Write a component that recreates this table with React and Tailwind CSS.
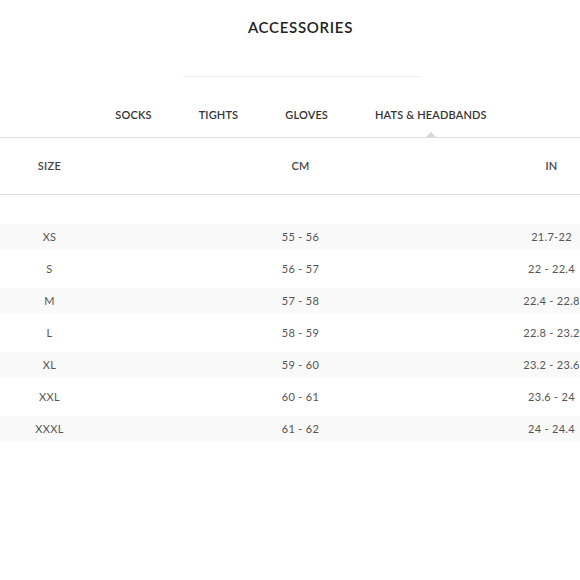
import React from "react";

const rows = [
  ["XS", "55 - 56", "21.7-22"],
  ["S", "56 - 57", "22 - 22.4"],
  ["M", "57 - 58", "22.4 - 22.8"],
  ["L", "58 - 59", "22.8 - 23.2"],
  ["XL", "59 - 60", "23.2 - 23.6"],
  ["XXL", "60 - 61", "23.6 - 24"],
  ["XXXL", "61 - 62", "24 - 24.4"],
];

const tabs = ["SOCKS", "TIGHTS", "GLOVES", "HATS & HEADBANDS"];

export default function App() {
  return (
    <div className="w-[580px] h-[580px] overflow-hidden bg-white text-[#333]" style={{ fontFamily: "Lato, 'Noto Sans', sans-serif" }}>
      <div className="h-[76px] pt-[18px] pl-[21px] text-center">
        <div className="text-[15px] leading-[18px] font-semibold tracking-[0.7px] text-[#222]">ACCESSORIES</div>
      </div>
      <div className="flex justify-center pl-[24px]">
        <div className="w-[238px] h-px bg-[#f0f0f0]" />
      </div>
      <div className="h-[61px] border-b border-[#dcdcdc] flex justify-center gap-[47px] pl-[22px]">
        {tabs.map((t, i) => (
          <div key={t} className="relative h-full pt-[31px]">
            <div className="text-[11px] leading-[14px] font-semibold tracking-[0.15px] text-[#333] whitespace-nowrap">{t}</div>
            {i === 3 && (
              <div className="absolute bottom-0 left-1/2 -translate-x-1/2 w-0 h-0 border-l-[5px] border-r-[5px] border-b-[5px] border-l-transparent border-r-transparent border-b-[#d8d8d8]" />
            )}
          </div>
        ))}
      </div>
      <div className="w-[580px] overflow-hidden">
        <div className="ml-[-76px] w-[753px]">
          <div className="h-[57px] border-b border-[#dcdcdc] grid grid-cols-3 items-center text-[11px] font-semibold tracking-[0.3px] text-[#444]">
            <div className="text-center">SIZE</div>
            <div className="text-center">CM</div>
            <div className="text-center">IN</div>
          </div>
          <div className="pt-[26px]">
            {rows.map((r, i) => (
              <div key={r[0]} className="h-[32px] py-[3px]">
                <div className={`h-[26px] grid grid-cols-3 items-center text-[11px] tracking-[0.3px] text-[#555] ${i % 2 === 0 ? "bg-[#f9f9f9]" : ""}`}>
                  <div className="text-center">{r[0]}</div>
                  <div className="text-center">{r[1]}</div>
                  <div className="text-center">{r[2]}</div>
                </div>
              </div>
            ))}
          </div>
        </div>
      </div>
    </div>
  );
}
